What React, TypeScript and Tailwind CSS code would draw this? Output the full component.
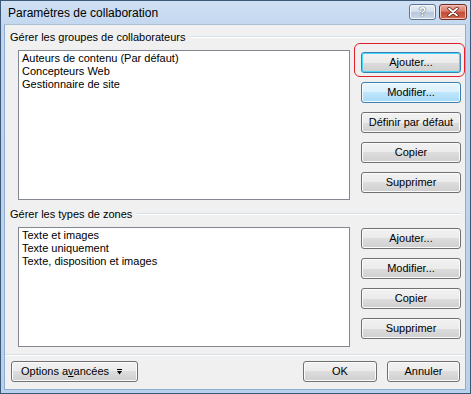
import React from "react";

const font = { fontFamily: '"Liberation Sans", Arial, sans-serif' };

function Btn({
  children,
  className = "",
  variant = "normal",
}: {
  children: React.ReactNode;
  className?: string;
  variant?: "normal" | "hover" | "focus";
}) {
  const base =
    "flex items-center justify-center rounded-[3px] border text-[11px] leading-none text-black h-[21px] shrink-0 whitespace-nowrap";
  const v =
    variant === "hover"
      ? "border-[#3c7fb1] bg-[linear-gradient(to_bottom,#eaf6fd_0%,#d9f0fc_50%,#bee6fd_50%,#a7d9f5_100%)] shadow-[inset_0_0_0_1px_#f4fbfe]"
      : variant === "focus"
      ? "border-[#3c7fb1] bg-[linear-gradient(to_bottom,#f2f2f2_0%,#ebebeb_50%,#dddddd_50%,#cfcfcf_100%)] shadow-[inset_0_0_0_1px_#48d8fb]"
      : "border-[#707070] bg-[linear-gradient(to_bottom,#f2f2f2_0%,#ebebeb_50%,#dddddd_50%,#cfcfcf_100%)] shadow-[inset_0_0_0_1px_#fbfbfb]";
  return <div className={`${base} ${v} ${className}`}>{children}</div>;
}

function GroupHeader({ label }: { label: string }) {
  return (
    <div className="flex items-center h-[14px] pl-[5px] pr-[4px]">
      <span className="text-[11px] leading-[14px] text-black whitespace-nowrap">{label}</span>
      <div className="flex-1 ml-[5px] h-[2px] border-t border-[#d5dfe5] border-b-white border-b" />
    </div>
  );
}

export default function App() {
  return (
    <div
      className="w-[471px] h-[394px] flex flex-col border border-[#3d5876] bg-[linear-gradient(to_bottom,#cfe0f3_0%,#c0d5ee_30px,#b9d1ea_100%)]"
      style={font}
    >
      {/* Title bar */}
      <div className="h-[23px] flex items-center pl-[7px] pr-[3px] shrink-0">
        <span className="text-[12px] text-black leading-none mt-[1px]">Paramètres de collaboration</span>
        <div className="ml-auto flex items-center gap-[3px] self-start mt-[3px]">
          <div className="w-[27px] h-[16px] rounded-[3px] border border-[#5f7694] bg-[linear-gradient(to_bottom,#e9eef5_0%,#d2dce9_50%,#b7c7dc_50%,#c9d7e8_100%)] flex items-center justify-center shadow-[inset_0_0_0_1px_#f2f6fb]">
            <span className="text-[12px] font-bold text-white leading-none [text-shadow:0_0_1px_#3d4f66,0_0_1px_#3d4f66]">?</span>
          </div>
          <div className="w-[28px] h-[16px] rounded-[3px] border border-[#6e2c22] bg-[linear-gradient(to_bottom,#e9a99b_0%,#d9806e_45%,#c34b35_50%,#d26a50_100%)] flex items-center justify-center shadow-[inset_0_0_0_1px_#f0c2b8]">
            <svg width="12" height="10" viewBox="0 0 12 10">
              <path d="M2 1.5 L10 8.5 M10 1.5 L2 8.5" stroke="#5a1a10" strokeWidth="3.2" strokeLinecap="round" />
              <path d="M2 1.5 L10 8.5 M10 1.5 L2 8.5" stroke="#ffffff" strokeWidth="1.8" strokeLinecap="round" />
            </svg>
          </div>
        </div>
      </div>

      {/* Content */}
      <div className="flex-1 ml-[3px] mr-[4px] mb-[3px] bg-[#f0f0f0] border border-[#8eaed3] border-t-[#aebfd4] flex flex-col relative">
        <div className="h-[5px]" />
        <GroupHeader label="Gérer les groupes de collaborateurs" />
        <div className="flex mt-[6px] pl-[13px]">
          <div className="w-[332px] h-[150px] bg-white border border-[#828790] pl-[3px] pt-[1px] text-[11px] leading-[13px] text-black">
            <div>Auteurs de contenu (Par défaut)</div>
            <div>Concepteurs Web</div>
            <div>Gestionnaire de site</div>
          </div>
          <div className="ml-[11px] mt-[2px] flex flex-col gap-[9px] relative">
            <div className="absolute left-[-7px] top-[-9px] w-[111px] h-[34px] rounded-[6px] border border-[#e0202a]" />
            <Btn className="w-[100px]" variant="focus">Ajouter...</Btn>
            <Btn className="w-[100px]" variant="hover">Modifier...</Btn>
            <Btn className="w-[100px]">Définir par défaut</Btn>
            <Btn className="w-[100px]">Copier</Btn>
            <Btn className="w-[100px]">Supprimer</Btn>
          </div>
        </div>

        <div className="mt-[7px]">
          <GroupHeader label="Gérer les types de zones" />
        </div>
        <div className="flex mt-[6px] pl-[13px]">
          <div className="w-[332px] h-[120px] bg-white border border-[#828790] pl-[3px] pt-[1px] text-[11px] leading-[13px] text-black">
            <div>Texte et images</div>
            <div>Texte uniquement</div>
            <div>Texte, disposition et images</div>
          </div>
          <div className="ml-[11px] mt-[1px] flex flex-col gap-[9px]">
            <Btn className="w-[100px]">Ajouter...</Btn>
            <Btn className="w-[100px]">Modifier...</Btn>
            <Btn className="w-[100px]">Copier</Btn>
            <Btn className="w-[100px]">Supprimer</Btn>
          </div>
        </div>

        <div className="mt-[7px] h-[2px] border-t border-[#d5dfe5] border-b border-b-white" />

        <div className="flex mt-[5px] pl-[6px]">
          <Btn className="w-[127px] justify-start pl-[9px]">
            <span>
              Options a<span className="underline">v</span>ancées
            </span>
            <svg className="ml-[8px]" width="5" height="6" viewBox="0 0 5 6">
              <rect x="0" y="0" width="5" height="1" fill="#000" />
              <path d="M0 2 L5 2 L2.5 5.5 Z" fill="#000" />
            </svg>
          </Btn>
          <Btn className="w-[74px] ml-auto">OK</Btn>
          <Btn className="w-[73px] ml-[10px] mr-[5px]">Annuler</Btn>
        </div>
      </div>
    </div>
  );
}
